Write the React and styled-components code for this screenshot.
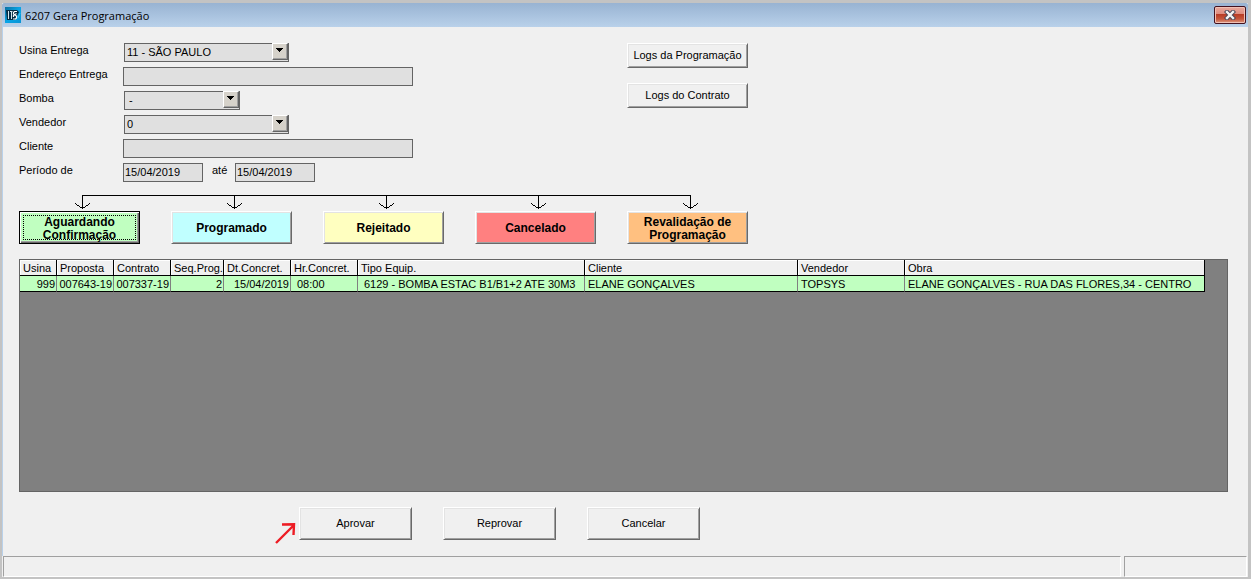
import React from "react";
import styled, { createGlobalStyle } from "styled-components";

const Global = createGlobalStyle`
  *, *::before, *::after { box-sizing: border-box; }
  body {
    margin: 0;
    background: #c3c3c3;
    color: #000;
    font: 11px/16px "Liberation Sans", Arial, sans-serif;
  }
  button, input, select { font: inherit; color: inherit; }
`;

const Window = styled.div`
  display: flex;
  flex-direction: column;
  min-height: 100vh;
  border: solid #c3c3c3;
  border-width: 3px 3px 2px 2px;
  background: #f0f0f0;
`;

const TitleBar = styled.header`
  display: flex;
  align-items: center;
  gap: 4px;
  height: 24px;
  padding: 0 2px 0 3px;
  background: linear-gradient(#98b3d2, #b9d1ea);
  border-radius: 2px 2px 0 0;
`;

const Title = styled.h1`
  flex: 1;
  margin: 0;
  padding-top: 2px;
  font: 11px/16px "Open Sans", "Noto Sans", sans-serif;
`;

const CloseButton = styled.button`
  display: flex;
  align-items: center;
  justify-content: center;
  width: 32px;
  height: 18px;
  padding: 0;
  border: 1px solid #43121f;
  border-radius: 2px;
  background: linear-gradient(#e9a99d 0, #dd8b7e 45%, #b83c25 46%, #c5563c 75%, #dd9a80 100%);
  box-shadow: inset 0 0 0 1px #f0c0b4;
`;

const Main = styled.main`
  flex: 1;
  display: flex;
  flex-direction: column;
  padding: 15px 20px 12px 16px;
  border-left: 1px solid #b9d1ea;
`;

const TopArea = styled.div`
  display: grid;
  grid-template-columns: 608px 121px;
`;

const Form = styled.form`
  display: grid;
  grid-auto-rows: 24px;
`;

const FieldRow = styled.div`
  display: flex;
  align-items: flex-start;
`;

const Label = styled.label`
  width: 104px;
`;

const UntilLabel = styled.label`
  width: 32px;
  padding-left: 9px;
`;

const TextInput = styled.input`
  width: ${(p) => p.$width}px;
  height: 19px;
  margin: 1px 0 0;
  padding: 0 1px 2px;
  border: 1px solid #646464;
  border-radius: 0;
  background: #e0e0e0;
  outline: none;
`;

const SelectBox = styled.div`
  display: flex;
  position: relative;
  width: ${(p) => p.$width}px;
  height: 19px;
  margin: 1px 0 0 1px;
  border: 1px solid #646464;
  background: #e0e0e0;
`;

const Select = styled.select`
  appearance: none;
  flex: 1;
  padding: 0 0 1px ${(p) => p.$indent}px;
  border: 0;
  border-radius: 0;
  background: transparent;
  outline: none;
`;

const DropArrow = styled.span`
  position: absolute;
  top: -1px;
  right: 0;
  display: flex;
  justify-content: center;
  width: 16px;
  height: 17px;
  padding: 4px 1px 0 0;
  border: 1px solid;
  border-color: #fff #646464 #646464 #fff;
  background: #d6d2ca;
  box-shadow: inset -1px -1px 0 #a0a0a0;
  pointer-events: none;
`;

const RaisedButton = styled.button`
  width: ${(p) => p.$width}px;
  height: ${(p) => p.$height}px;
  padding: 0 0 2px;
  border: 1px solid;
  border-color: #fff #696969 #696969 #fff;
  border-radius: 0;
  background: #f0f0f0;
  box-shadow: inset 1px 1px 0 #e3e3e3, inset -1px -1px 0 #a0a0a0;
`;

const LogButtons = styled.div`
  display: flex;
  flex-direction: column;
  gap: 15px;
  padding-top: 1px;
`;

const Flow = styled.svg`
  display: block;
  margin-top: 8px;
`;

const StatusButtons = styled.div`
  display: flex;
  gap: 31px;
`;

const StatusButton = styled(RaisedButton)`
  position: relative;
  padding: 2px 0 0;
  background: ${(p) => p.$color};
  font: bold 12px/13px "Liberation Sans", Arial, sans-serif;
  white-space: pre-line;
  ${(p) =>
    p.$current &&
    `
    border-color: #000;
    box-shadow: inset 1px 1px 0 #fff, inset -1px -1px 0 #696969, inset -2px -2px 0 #a0a0a0;
    &::after {
      content: "";
      position: absolute;
      inset: 3px;
      border: 1px dotted #000;
    }
  `}
`;

const GridPanel = styled.section`
  flex: 1;
  min-height: 120px;
  margin-top: 15px;
  border: 1px solid #646464;
  background: #808080;
  overflow: hidden;
`;

const Table = styled.table`
  table-layout: fixed;
  width: 1185px;
  border-collapse: separate;
  border-spacing: 0;
  white-space: nowrap;
`;

const HeadCell = styled.th`
  height: 16px;
  padding: 2px 0 0 3px;
  border-right: 1px solid #000;
  border-bottom: 1px solid #000;
  background: #f0f0f0;
  box-shadow: inset 1px 1px 0 #fff;
  font-weight: normal;
  line-height: 13px;
  text-align: left;
`;

const Cell = styled.td`
  height: 16px;
  padding: 2px ${(p) => (p.$end ? 1 : 0)}px 0 ${(p) => (p.$end ? 0 : p.$indent ? 6 : 3)}px;
  border-right: 1px solid #808080;
  border-bottom: 1px solid #000;
  background: #c0ffc0;
  line-height: 13px;
  text-align: ${(p) => (p.$end ? "right" : "left")};
  &:last-child { border-right-color: #000; }
`;

const Actions = styled.div`
  display: flex;
  align-items: flex-start;
  gap: 31px;
  margin-top: 15px;
  padding-left: 256px;
`;

const PointedAction = styled.div`
  display: flex;
  align-items: flex-start;
  gap: 3px;
`;

const Pointer = styled.svg`
  flex: none;
  margin-top: 15px;
`;

const StatusBar = styled.footer`
  display: flex;
  gap: 3px;
  height: 21px;
  padding: 0 1px;
`;

const StatusPane = styled.div`
  flex: ${(p) => (p.$width ? `0 0 ${p.$width}px` : "1")};
  border: 1px solid;
  border-color: #a0a0a0 #fff #fff #a0a0a0;
`;

const columns = [
  { name: "Usina", width: 37, value: "999", end: true },
  { name: "Proposta", width: 57, value: "007643-19", end: true },
  { name: "Contrato", width: 57, value: "007337-19", end: true },
  { name: "Seq.Prog.", width: 53, value: "2", end: true },
  { name: "Dt.Concret.", width: 67, value: "15/04/2019", end: true },
  { name: "Hr.Concret.", width: 67, value: "08:00", indent: true },
  { name: "Tipo Equip.", width: 227, value: "6129 - BOMBA ESTAC B1/B1+2 ATE 30M3", indent: true },
  { name: "Cliente", width: 213, value: "ELANE GONÇALVES" },
  { name: "Vendedor", width: 107, value: "TOPSYS" },
  { name: "Obra", width: 300, value: "ELANE GONÇALVES - RUA DAS FLORES,34 - CENTRO" },
];

const statuses = [
  { name: "Aguardando\nConfirmação", color: "#c0ffc0", current: true },
  { name: "Programado", color: "#c0ffff" },
  { name: "Rejeitado", color: "#ffffc0" },
  { name: "Cancelado", color: "#ff8080" },
  { name: "Revalidação de\nProgramação", color: "#ffc080" },
];

function Dropdown({ id, width, value, indent = 2 }) {
  return (
    <SelectBox $width={width}>
      <Select id={id} defaultValue={value} $indent={indent}>
        <option value={value}>{value}</option>
      </Select>
      <DropArrow>
        <svg width="7" height="4" viewBox="0 0 7 4" shapeRendering="crispEdges">
          <path d="M0 0H7V1H6V2H5V3H4V4H3V3H2V2H1V1H0Z" />
        </svg>
      </DropArrow>
    </SelectBox>
  );
}

function AppIcon() {
  return (
    <svg width="16" height="16" viewBox="0 0 16 16" aria-hidden="true">
      <defs>
        <linearGradient id="sky" x1="0" y1="0" x2="1" y2="1">
          <stop offset="0" stopColor="#0a6fa0" />
          <stop offset="0.5" stopColor="#08a5e6" />
          <stop offset="1" stopColor="#0a94d4" />
        </linearGradient>
      </defs>
      <rect width="16" height="16" fill="url(#sky)" />
      <path d="M1 3H12L14 5L10 13H2Z" fill="#062d44" />
      <path d="M3.5 4V12M5 4.5H7.5M6.500 4V12" stroke="#d5e6ee" strokeWidth="1" fill="none" />
      <path d="M12 4.500H9.500L8.500 5.500V7L11.500 9V11L10.500 12H8M8.500 10V8.500L11.500 6.500" stroke="#fff" strokeWidth="1.2" fill="none" />
      <path d="M13 11L15 6" stroke="#39c8f7" />
    </svg>
  );
}

export default function App() {
  return (
    <>
      <Global />
      <Window>
        <TitleBar>
          <AppIcon />
          <Title>6207 Gera Programação</Title>
          <CloseButton type="button" aria-label="Fechar">
            <svg width="12" height="10" viewBox="0 0 12 10">
              <path d="M3 2L9 8M9 2L3 8" stroke="#4b4858" strokeWidth="4.4" strokeLinecap="square" />
              <path d="M3 2L9 8M9 2L3 8" stroke="#f4f4f4" strokeWidth="2.4" strokeLinecap="square" />
            </svg>
          </CloseButton>
        </TitleBar>
        <Main>
          <TopArea>
            <Form>
              <FieldRow>
                <Label htmlFor="usina">Usina Entrega</Label>
                <Dropdown id="usina" width={165} value="11 - SÃO PAULO" />
              </FieldRow>
              <FieldRow>
                <Label htmlFor="endereco">Endereço Entrega</Label>
                <TextInput id="endereco" $width={290} />
              </FieldRow>
              <FieldRow>
                <Label htmlFor="bomba">Bomba</Label>
                <Dropdown id="bomba" width={116} value="-" indent={4} />
              </FieldRow>
              <FieldRow>
                <Label htmlFor="vendedor">Vendedor</Label>
                <Dropdown id="vendedor" width={165} value="0" />
              </FieldRow>
              <FieldRow>
                <Label htmlFor="cliente">Cliente</Label>
                <TextInput id="cliente" $width={290} />
              </FieldRow>
              <FieldRow>
                <Label htmlFor="inicio">Período de</Label>
                <TextInput id="inicio" $width={80} defaultValue="15/04/2019" />
                <UntilLabel htmlFor="fim">até</UntilLabel>
                <TextInput id="fim" $width={80} defaultValue="15/04/2019" />
              </FieldRow>
            </Form>
            <LogButtons>
              <RaisedButton type="button" $width={121} $height={25}>Logs da Programação</RaisedButton>
              <RaisedButton type="button" $width={121} $height={25}>Logs do Contrato</RaisedButton>
            </LogButtons>
          </TopArea>
          <Flow width="729" height="17" viewBox="0 0 729 17" fill="none" stroke="#000" shapeRendering="crispEdges" aria-hidden="true">
            <path d="M63 1.5H672" />
            {statuses.map((s, i) => (
              <path key={s.name} transform={`translate(${i * 152} 0)`} d="M63.5 1V14M56 9.5L63.5 14.5L71 9.5" />
            ))}
          </Flow>
          <StatusButtons>
            {statuses.map((s) => (
              <StatusButton key={s.name} type="button" $width={121} $height={33} $color={s.color} $current={s.current}>
                {s.name}
              </StatusButton>
            ))}
          </StatusButtons>
          <GridPanel>
            <Table>
              <colgroup>
                {columns.map((c) => <col key={c.name} width={c.width} />)}
              </colgroup>
              <thead>
                <tr>{columns.map((c) => <HeadCell key={c.name} scope="col">{c.name}</HeadCell>)}</tr>
              </thead>
              <tbody>
                <tr>
                  {columns.map((c) => (
                    <Cell key={c.name} $end={c.end} $indent={c.indent}>{c.value}</Cell>
                  ))}
                </tr>
              </tbody>
            </Table>
          </GridPanel>
          <Actions>
            <PointedAction>
              <Pointer width="21" height="22" viewBox="0 0 21 22" fill="none" stroke="#ed1c24" strokeWidth="2.4" aria-hidden="true">
                <path d="M1 21L19 3M7 2.500L19 2.200L18.500 13" />
              </Pointer>
              <RaisedButton type="button" $width={113} $height={33}>Aprovar</RaisedButton>
            </PointedAction>
            <RaisedButton type="button" $width={113} $height={33}>Reprovar</RaisedButton>
            <RaisedButton type="button" $width={113} $height={33}>Cancelar</RaisedButton>
          </Actions>
        </Main>
        <StatusBar>
          <StatusPane />
          <StatusPane $width={123} />
        </StatusBar>
      </Window>
    </>
  );
}
